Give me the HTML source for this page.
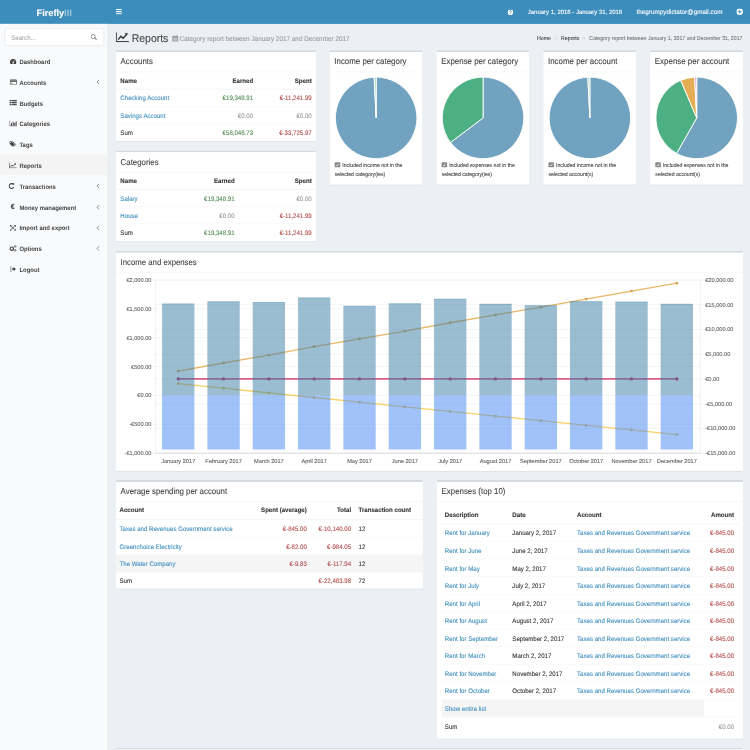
<!DOCTYPE html>
<html><head><meta charset="utf-8">
<style>
html,body{margin:0;padding:0;width:750px;height:750px;overflow:hidden;background:#ecf0f5;}
#pg{position:absolute;left:0;top:0;width:1600px;height:1600px;transform:scale(0.46875);transform-origin:0 0;text-rendering:geometricPrecision;font-family:"Liberation Sans",sans-serif;font-size:13px;color:#333;background:#ecf0f5;overflow:hidden;}
.abs{position:absolute;}
#hdr{left:0;top:0;width:1600px;height:51.2px;background:#3c8dbc;color:#fff;}
#logo{left:0;top:2.5px;width:230px;height:50px;line-height:50px;text-align:center;font-size:19.6px;padding-left:2px;box-sizing:border-box;}
#logo b{font-weight:700;}
#logo span{font-weight:300;opacity:.7;letter-spacing:0.3px;-webkit-text-stroke:0 !important}
#side{left:0;top:51px;width:230px;height:1549px;background:#f9fafc;border-right:1.5px solid #d2d6de;}
#search{left:10px;top:10px;width:208px;height:34px;background:#fff;border:1px solid #d2d6de;border-radius:3px;}
#search .ph{left:13px;top:0;line-height:34px;color:#999;font-size:13px;}
.mi{position:absolute;left:0;width:229px;height:44px;line-height:44px;font-weight:700;color:#444;font-size:13px;}
.mi .ic{position:absolute;left:18px;top:13px;width:18px;height:18px;}
.mi .tx{position:absolute;left:42px;top:0;}
.mi .ar{position:absolute;left:202px;top:0;font-weight:400;color:#777;}
.box{position:absolute;background:#fff;border-top:4.2px solid #d5d9e0;border-radius:3px;box-shadow:0 1px 1px rgba(0,0,0,.1);box-sizing:border-box;}
.bh{position:absolute;left:0;top:0;right:0;height:39px;border-bottom:1px solid #f4f4f4;}
.bh .t{position:absolute;left:10px;top:0;line-height:39px;font-size:16.8px;color:#444;}
table{border-collapse:collapse;}
.tb{position:absolute;left:0;width:100%;}
.tb td,.tb th{height:37px;padding:0 8px;box-sizing:border-box;border-top:1px solid #f4f4f4;white-space:nowrap;font-size:13px;}
.tb th{font-weight:700;color:#333;border-top:0;border-bottom:2px solid #f4f4f4;}
.r{text-align:right;}
.t{position:absolute;white-space:nowrap;}
#pg div,#pg span{-webkit-text-stroke:0.2px currentColor;}
a{color:#3c8dbc;text-decoration:none;}
.g{color:#3c763d;}
.red{color:#a94442;}
.mu{color:#999;}
</style></head><body>
<div id="wrap" style="position:absolute;left:0;top:0;width:750px;height:750px;overflow:hidden;filter:blur(0.45px)">
<div id="pg">
 <!-- header -->
 <div id="hdr" class="abs">
  <div id="logo" class="abs"><b>Firefly</b><span>III</span></div>
  <svg class="abs" style="left:247px;top:19px" width="13" height="12" viewBox="0 0 13 12"><rect x="0" y="0" width="13" height="2.4" fill="#fff"/><rect x="0" y="4.6" width="13" height="2.4" fill="#fff"/><rect x="0" y="9.2" width="13" height="2.4" fill="#fff"/></svg>
  <svg class="abs" style="left:1083px;top:19.5px" width="12" height="12" viewBox="0 0 12 12"><circle cx="6" cy="6" r="6" fill="#fff"/><path d="M4 4.6 A2 2 0 1 1 6.6 6.3 L6 6.8 V8" fill="none" stroke="#3c8dbc" stroke-width="1.5"/><rect x="5.2" y="8.6" width="1.6" height="1.6" fill="#3c8dbc"/></svg>
  <div class="abs" style="left:1126px;top:0.8px;line-height:50px;font-size:12.75px;color:#fff">January 1, 2018 - January 31, 2018</div>
  <div class="abs" style="left:1358px;top:0.8px;line-height:50px;font-size:13.5px;color:#fff">thegrumpydictator@gmail.com</div>
  <svg class="abs" style="left:1571px;top:18px" width="14" height="14" viewBox="0 0 14 14"><circle cx="7" cy="7" r="7" fill="#fff"/><rect x="3" y="6" width="8" height="2" fill="#3c8dbc"/><rect x="6" y="3" width="2" height="8" fill="#3c8dbc"/></svg>
 </div>
 <!-- sidebar -->
 <div id="side" class="abs"></div>
 <div class="t" style="left:10px;top:60px;width:209.5px;height:35.5px;background:#fff;border:1px solid #d2d6de;border-radius:3px;-webkit-text-stroke:0"></div>
<div class="t" style="left:24px;top:70.40px;line-height:20px;font-size:13px;color:#aaa;font-weight:400;transform:scaleY(1.08);">Search...</div>
<svg class="t" style="left:193px;top:72px" width="14" height="14" viewBox="0 0 14 14"><circle cx="5.8" cy="5.8" r="4.3" fill="none" stroke="#888" stroke-width="1.9"/><line x1="9" y1="9" x2="12.5" y2="12.5" stroke="#888" stroke-width="2.4" stroke-linecap="round"/></svg>
<div class="t" style="left:41.5px;top:121.70px;line-height:20px;font-size:12.6px;color:#444;font-weight:700;transform:scaleY(1.08);-webkit-text-stroke:0">Dashboard</div>
<div class="t" style="left:41.5px;top:166.10px;line-height:20px;font-size:12.6px;color:#444;font-weight:700;transform:scaleY(1.08);-webkit-text-stroke:0">Accounts</div>
<svg class="t" style="left:204px;top:169.2px" width="10" height="12" viewBox="0 0 10 12"><path d="M7.5 1.5 L3 6 L7.5 10.5" fill="none" stroke="#666" stroke-width="1.5"/></svg>
<div class="t" style="left:41.5px;top:210.50px;line-height:20px;font-size:12.6px;color:#444;font-weight:700;transform:scaleY(1.08);-webkit-text-stroke:0">Budgets</div>
<div class="t" style="left:41.5px;top:254.90px;line-height:20px;font-size:12.6px;color:#444;font-weight:700;transform:scaleY(1.08);-webkit-text-stroke:0">Categories</div>
<div class="t" style="left:41.5px;top:299.30px;line-height:20px;font-size:12.6px;color:#444;font-weight:700;transform:scaleY(1.08);-webkit-text-stroke:0">Tags</div>
<div class="t" style="left:0px;top:329.8px;width:230px;height:43.2px;background:#f4f4f5"></div>
<div class="t" style="left:41.5px;top:343.70px;line-height:20px;font-size:12.6px;color:#444;font-weight:700;transform:scaleY(1.08);-webkit-text-stroke:0">Reports</div>
<div class="t" style="left:41.5px;top:388.10px;line-height:20px;font-size:12.6px;color:#444;font-weight:700;transform:scaleY(1.08);-webkit-text-stroke:0">Transactions</div>
<svg class="t" style="left:204px;top:391.2px" width="10" height="12" viewBox="0 0 10 12"><path d="M7.5 1.5 L3 6 L7.5 10.5" fill="none" stroke="#666" stroke-width="1.5"/></svg>
<div class="t" style="left:41.5px;top:432.50px;line-height:20px;font-size:12.6px;color:#444;font-weight:700;transform:scaleY(1.08);-webkit-text-stroke:0">Money management</div>
<svg class="t" style="left:204px;top:435.6px" width="10" height="12" viewBox="0 0 10 12"><path d="M7.5 1.5 L3 6 L7.5 10.5" fill="none" stroke="#666" stroke-width="1.5"/></svg>
<div class="t" style="left:41.5px;top:476.90px;line-height:20px;font-size:12.6px;color:#444;font-weight:700;transform:scaleY(1.08);-webkit-text-stroke:0">Import and export</div>
<svg class="t" style="left:204px;top:480.0px" width="10" height="12" viewBox="0 0 10 12"><path d="M7.5 1.5 L3 6 L7.5 10.5" fill="none" stroke="#666" stroke-width="1.5"/></svg>
<div class="t" style="left:41.5px;top:521.30px;line-height:20px;font-size:12.6px;color:#444;font-weight:700;transform:scaleY(1.08);-webkit-text-stroke:0">Options</div>
<svg class="t" style="left:204px;top:524.4px" width="10" height="12" viewBox="0 0 10 12"><path d="M7.5 1.5 L3 6 L7.5 10.5" fill="none" stroke="#666" stroke-width="1.5"/></svg>
<div class="t" style="left:41.5px;top:565.70px;line-height:20px;font-size:12.6px;color:#444;font-weight:700;transform:scaleY(1.08);-webkit-text-stroke:0">Logout</div>
<svg class="t" style="left:21px;top:124.5px" width="14" height="12" viewBox="0 0 14 12"><path d="M1.26 11.5 A7 7 0 1 1 12.74 11.5 Z" fill="#444"/><path d="M7 9.5 L9.8 4" stroke="#f9fafc" stroke-width="1.4"/><circle cx="7" cy="9.5" r="1.6" fill="#f9fafc"/><circle cx="3" cy="6.5" r="0.8" fill="#f9fafc"/><circle cx="7" cy="3" r="0.8" fill="#f9fafc"/></svg>
<svg class="t" style="left:20.7px;top:168.5px" width="15" height="12.5" viewBox="0 0 15 12.5"><rect x="0.8" y="0.8" width="13.4" height="10.9" rx="1" fill="none" stroke="#444" stroke-width="1.6"/><rect x="0.8" y="2.5" width="13.4" height="3" fill="#444"/><rect x="2.5" y="8.5" width="3" height="1.2" fill="#444"/></svg>
<svg class="t" style="left:20.3px;top:212.5px" width="16" height="12" viewBox="0 0 16 12"><rect x="0" y="0" width="16" height="3" fill="#444"/><rect x="0" y="4.5" width="16" height="3" fill="#444"/><rect x="0" y="9" width="16" height="3" fill="#444"/><rect x="4" y="0.9" width="1" height="11" fill="#f9fafc"/></svg>
<svg class="t" style="left:19.6px;top:257.4px" width="16.5" height="12.5" viewBox="0 0 16.5 12.5"><path d="M0.8 0 V11.7 H16.5" fill="none" stroke="#444" stroke-width="1.5"/><rect x="3.5" y="6" width="2.2" height="5" fill="#444"/><rect x="7" y="3" width="2.2" height="8" fill="#444"/><rect x="10.5" y="5" width="2.2" height="6" fill="#444"/><rect x="13.5" y="2" width="2.2" height="9" fill="#444"/></svg>
<svg class="t" style="left:20.2px;top:301.2px" width="15.5" height="12" viewBox="0 0 15.5 12"><path d="M0 0.5 L0 5 L7 12 L11.5 7.5 L4.5 0.5Z" fill="#444"/><path d="M6.5 0.5 L13.5 7.5 L9.5 11.8" fill="none" stroke="#444" stroke-width="1.6"/><circle cx="2.6" cy="3" r="1.1" fill="#f9fafc"/></svg>
<svg class="t" style="left:19.2px;top:346.9px" width="16.5" height="12" viewBox="0 0 16.5 12"><path d="M0.8 0 V11.2 H16.5" fill="none" stroke="#444" stroke-width="1.5"/><path d="M3 9 L6.5 5 L9 7.5 L13.5 3" fill="none" stroke="#444" stroke-width="1.8"/><path d="M11 1.8 L15.2 1 L14.6 5Z" fill="#444"/></svg>
<svg class="t" style="left:17.7px;top:390.4px" width="13" height="13" viewBox="0 0 13 13"><path d="M11 4 A5.2 5.2 0 1 0 11.4 9" fill="none" stroke="#444" stroke-width="2.3"/><path d="M8.5 1 L12.8 0.5 L12.5 5.5Z" fill="#444"/></svg>
<div class="t" style="left:23.2px;top:431.90px;line-height:20px;font-size:15px;color:#444;font-weight:700;transform:scaleY(1.08);">&#8364;</div>
<svg class="t" style="left:21.3px;top:480px" width="13" height="12" viewBox="0 0 13 12"><path d="M2.5 2.5 L10.5 9.5 M10.5 2.5 L2.5 9.5" stroke="#444" stroke-width="1.7"/><path d="M0 0 H4.5 L0 4Z M13 0 V4 L8.5 0Z M0 12 V8 L4.5 12Z M13 12 H8.5 L13 8Z" fill="#444"/></svg>
<svg class="t" style="left:20.3px;top:522.8px" width="15.5" height="14" viewBox="0 0 15.5 14"><circle cx="5" cy="7.5" r="3.6" fill="none" stroke="#444" stroke-width="2.6"/><circle cx="12.3" cy="2.6" r="1.9" fill="none" stroke="#444" stroke-width="1.6"/><circle cx="12.3" cy="11.2" r="1.9" fill="none" stroke="#444" stroke-width="1.6"/></svg>
<svg class="t" style="left:21.4px;top:567.9px" width="13.5" height="12" viewBox="0 0 13.5 12"><path d="M4.5 1 H1.2 V11 H4.5" fill="none" stroke="#888" stroke-width="1.4"/><path d="M4 4.5 H8 V1.5 L13 6 L8 10.5 V7.5 H4Z" fill="#444"/></svg>
<svg class="t" style="left:247px;top:68.5px" width="28" height="21" viewBox="0 0 28 21"><path d="M1.2 0 V19.8 H28" fill="none" stroke="#444" stroke-width="2.2"/><path d="M5 15.5 L11 8.5 L15.5 12.5 L22.5 5" fill="none" stroke="#333" stroke-width="3"/><path d="M18.5 2.5 L25 1 L24.2 7.5Z" fill="#333"/></svg>
<div class="t" style="left:281px;top:65.70px;line-height:30px;font-size:22.3px;color:#444;font-weight:400;transform:scaleY(1.08);">Reports</div>
<svg class="t" style="left:367px;top:75px" width="14" height="14" viewBox="0 0 14 14"><rect x="0.5" y="2" width="13" height="12" rx="1" fill="#999"/><rect x="3" y="0" width="2" height="3.5" fill="#999"/><rect x="9" y="0" width="2" height="3.5" fill="#999"/><path d="M2 6 H12 M2 9 H12 M2 12 H12 M5 5 V13.5 M8.5 5 V13.5" stroke="#ecf0f5" stroke-width="0.8"/></svg>
<div class="t" style="left:383px;top:73.70px;line-height:20px;font-size:13.6px;color:#9a9a9a;font-weight:400;transform:scaleY(1.08);">Category report between January 2017 and December 2017</div>
<div class="t" style="left:1145.5px;top:73.40px;line-height:20px;font-size:11.2px;color:#444;font-weight:400;transform:scaleY(1.08);">Home</div>
<div class="t" style="left:1183px;top:73.40px;line-height:20px;font-size:9px;color:#ccc;font-weight:400;transform:scaleY(1.08);">&gt;</div>
<div class="t" style="left:1197px;top:73.40px;line-height:20px;font-size:11.1px;color:#444;font-weight:400;transform:scaleY(1.08);">Reports</div>
<div class="t" style="left:1243px;top:73.40px;line-height:20px;font-size:9px;color:#ccc;font-weight:400;transform:scaleY(1.08);">&gt;</div>
<div class="t" style="left:1257px;top:73.40px;line-height:20px;font-size:11.1px;color:#777;font-weight:400;transform:scaleY(1.08);">Category report between January 1, 2017 and December 31, 2017</div>
<div class="box" style="left:246.8px;top:106.8px;width:427.5px;height:194.2px;"></div>
<div class="t" style="left:257.3px;top:120.40px;line-height:24px;font-size:16.8px;color:#444;font-weight:400;transform:scaleY(1.08);">Accounts</div>
<div class="t" style="left:246.8px;top:152.5px;width:427.5px;height:1px;background:#efefef"></div>
<div class="t" style="left:246.8px;top:189px;width:427.5px;height:2px;background:#f4f4f4"></div>
<div class="t" style="left:246.8px;top:226px;width:427.5px;height:1px;background:#f4f4f4"></div>
<div class="t" style="left:246.8px;top:263px;width:427.5px;height:1px;background:#f4f4f4"></div>
<div class="t" style="left:256.8px;top:161.90px;line-height:20px;font-size:13px;color:#333;font-weight:700;transform:scaleY(1.08);">Name</div>
<div class="t" style="left:-460px;width:1000px;text-align:right;top:161.90px;line-height:20px;font-size:13px;color:#333;font-weight:700;transform:scaleY(1.08);">Earned</div>
<div class="t" style="left:-335px;width:1000px;text-align:right;top:161.90px;line-height:20px;font-size:13px;color:#333;font-weight:700;transform:scaleY(1.08);">Spent</div>
<div class="t" style="left:256.8px;top:200.20px;line-height:20px;font-size:13px;color:#3c8dbc;font-weight:400;transform:scaleY(1.08);">Checking Account</div>
<div class="t" style="left:-460px;width:1000px;text-align:right;top:200.20px;line-height:20px;font-size:13px;color:#4f8d53;font-weight:400;transform:scaleY(1.08);">€19,348.91</div>
<div class="t" style="left:-335px;width:1000px;text-align:right;top:200.20px;line-height:20px;font-size:13px;color:#b04a47;font-weight:400;transform:scaleY(1.08);">€-11,241.99</div>
<div class="t" style="left:256.8px;top:237.20px;line-height:20px;font-size:13px;color:#3c8dbc;font-weight:400;transform:scaleY(1.08);">Savings Account</div>
<div class="t" style="left:-460px;width:1000px;text-align:right;top:237.20px;line-height:20px;font-size:13px;color:#999;font-weight:400;transform:scaleY(1.08);">€0.00</div>
<div class="t" style="left:-335px;width:1000px;text-align:right;top:237.20px;line-height:20px;font-size:13px;color:#999;font-weight:400;transform:scaleY(1.08);">€0.00</div>
<div class="t" style="left:256.8px;top:274.20px;line-height:20px;font-size:13px;color:#333;font-weight:400;transform:scaleY(1.08);">Sum</div>
<div class="t" style="left:-460px;width:1000px;text-align:right;top:274.20px;line-height:20px;font-size:13px;color:#4f8d53;font-weight:400;transform:scaleY(1.08);">€58,046.73</div>
<div class="t" style="left:-335px;width:1000px;text-align:right;top:274.20px;line-height:20px;font-size:13px;color:#b04a47;font-weight:400;transform:scaleY(1.08);">€-33,725.97</div>
<div class="box" style="left:246.8px;top:320.8px;width:427.5px;height:194.2px;"></div>
<div class="t" style="left:257.3px;top:334.40px;line-height:24px;font-size:16.8px;color:#444;font-weight:400;transform:scaleY(1.08);">Categories</div>
<div class="t" style="left:246.8px;top:366.5px;width:427.5px;height:1px;background:#efefef"></div>
<div class="t" style="left:246.8px;top:403px;width:427.5px;height:2px;background:#f4f4f4"></div>
<div class="t" style="left:246.8px;top:440px;width:427.5px;height:1px;background:#f4f4f4"></div>
<div class="t" style="left:246.8px;top:477px;width:427.5px;height:1px;background:#f4f4f4"></div>
<div class="t" style="left:256.8px;top:375.90px;line-height:20px;font-size:13px;color:#333;font-weight:700;transform:scaleY(1.08);">Name</div>
<div class="t" style="left:-499.5px;width:1000px;text-align:right;top:375.90px;line-height:20px;font-size:13px;color:#333;font-weight:700;transform:scaleY(1.08);">Earned</div>
<div class="t" style="left:-335px;width:1000px;text-align:right;top:375.90px;line-height:20px;font-size:13px;color:#333;font-weight:700;transform:scaleY(1.08);">Spent</div>
<div class="t" style="left:256.8px;top:414.40px;line-height:20px;font-size:13px;color:#3c8dbc;font-weight:400;transform:scaleY(1.08);">Salary</div>
<div class="t" style="left:-499.5px;width:1000px;text-align:right;top:414.40px;line-height:20px;font-size:13px;color:#4f8d53;font-weight:400;transform:scaleY(1.08);">€19,348.91</div>
<div class="t" style="left:-335px;width:1000px;text-align:right;top:414.40px;line-height:20px;font-size:13px;color:#999;font-weight:400;transform:scaleY(1.08);">€0.00</div>
<div class="t" style="left:256.8px;top:451.40px;line-height:20px;font-size:13px;color:#3c8dbc;font-weight:400;transform:scaleY(1.08);">House</div>
<div class="t" style="left:-499.5px;width:1000px;text-align:right;top:451.40px;line-height:20px;font-size:13px;color:#999;font-weight:400;transform:scaleY(1.08);">€0.00</div>
<div class="t" style="left:-335px;width:1000px;text-align:right;top:451.40px;line-height:20px;font-size:13px;color:#b04a47;font-weight:400;transform:scaleY(1.08);">€-11,241.99</div>
<div class="t" style="left:256.8px;top:488.40px;line-height:20px;font-size:13px;color:#333;font-weight:400;transform:scaleY(1.08);">Sum</div>
<div class="t" style="left:-499.5px;width:1000px;text-align:right;top:488.40px;line-height:20px;font-size:13px;color:#4f8d53;font-weight:400;transform:scaleY(1.08);">€19,348.91</div>
<div class="t" style="left:-335px;width:1000px;text-align:right;top:488.40px;line-height:20px;font-size:13px;color:#b04a47;font-weight:400;transform:scaleY(1.08);">€-11,241.99</div>
<div class="box" style="left:702.7px;top:106.8px;width:198px;height:287.2px;"></div>
<div class="t" style="left:713.2px;top:120.40px;line-height:24px;font-size:16.9px;color:#444;font-weight:400;transform:scaleY(1.08);">Income per category</div>
<div class="t" style="left:702.7px;top:152.5px;width:198px;height:1px;background:#efefef"></div>
<div class="t" style="left:714.2px;top:345.5px;width:12px;height:11.5px;border-radius:2.5px;background:#8a8a8a"></div>
<svg class="t" style="left:714.2px;top:345.5px" width="12" height="11.5" viewBox="0 0 12 11.5"><path d="M3.2 6 L5.2 8 L9 3.5" fill="none" stroke="#fff" stroke-width="1.5"/></svg>
<div class="t" style="left:730.2px;top:342.40px;line-height:20px;font-size:11px;color:#444;font-weight:400;transform:scaleY(1.08);">Included income not in the</div>
<div class="t" style="left:714.2px;top:362.90px;line-height:20px;font-size:11px;color:#444;font-weight:400;transform:scaleY(1.08);">selected category(ies)</div>
<div class="box" style="left:930.7px;top:106.8px;width:198px;height:287.2px;"></div>
<div class="t" style="left:941.2px;top:120.40px;line-height:24px;font-size:16.9px;color:#444;font-weight:400;transform:scaleY(1.08);">Expense per category</div>
<div class="t" style="left:930.7px;top:152.5px;width:198px;height:1px;background:#efefef"></div>
<div class="t" style="left:942.2px;top:345.5px;width:12px;height:11.5px;border-radius:2.5px;background:#8a8a8a"></div>
<svg class="t" style="left:942.2px;top:345.5px" width="12" height="11.5" viewBox="0 0 12 11.5"><path d="M3.2 6 L5.2 8 L9 3.5" fill="none" stroke="#fff" stroke-width="1.5"/></svg>
<div class="t" style="left:958.2px;top:342.40px;line-height:20px;font-size:11px;color:#444;font-weight:400;transform:scaleY(1.08);">Included expenses not in the</div>
<div class="t" style="left:942.2px;top:362.90px;line-height:20px;font-size:11px;color:#444;font-weight:400;transform:scaleY(1.08);">selected category(ies)</div>
<div class="box" style="left:1158.6px;top:106.8px;width:198px;height:287.2px;"></div>
<div class="t" style="left:1169.1px;top:120.40px;line-height:24px;font-size:16.9px;color:#444;font-weight:400;transform:scaleY(1.08);">Income per account</div>
<div class="t" style="left:1158.6px;top:152.5px;width:198px;height:1px;background:#efefef"></div>
<div class="t" style="left:1170.1px;top:345.5px;width:12px;height:11.5px;border-radius:2.5px;background:#8a8a8a"></div>
<svg class="t" style="left:1170.1px;top:345.5px" width="12" height="11.5" viewBox="0 0 12 11.5"><path d="M3.2 6 L5.2 8 L9 3.5" fill="none" stroke="#fff" stroke-width="1.5"/></svg>
<div class="t" style="left:1186.1px;top:342.40px;line-height:20px;font-size:11px;color:#444;font-weight:400;transform:scaleY(1.08);">Included income not in the</div>
<div class="t" style="left:1170.1px;top:362.90px;line-height:20px;font-size:11px;color:#444;font-weight:400;transform:scaleY(1.08);">selected account(s)</div>
<div class="box" style="left:1386.5px;top:106.8px;width:198px;height:287.2px;"></div>
<div class="t" style="left:1397.0px;top:120.40px;line-height:24px;font-size:16.9px;color:#444;font-weight:400;transform:scaleY(1.08);">Expense per account</div>
<div class="t" style="left:1386.5px;top:152.5px;width:198px;height:1px;background:#efefef"></div>
<div class="t" style="left:1398.0px;top:345.5px;width:12px;height:11.5px;border-radius:2.5px;background:#8a8a8a"></div>
<svg class="t" style="left:1398.0px;top:345.5px" width="12" height="11.5" viewBox="0 0 12 11.5"><path d="M3.2 6 L5.2 8 L9 3.5" fill="none" stroke="#fff" stroke-width="1.5"/></svg>
<div class="t" style="left:1414.0px;top:342.40px;line-height:20px;font-size:11px;color:#444;font-weight:400;transform:scaleY(1.08);">Included expenses not in the</div>
<div class="t" style="left:1398.0px;top:362.90px;line-height:20px;font-size:11px;color:#444;font-weight:400;transform:scaleY(1.08);">selected account(s)</div>
<svg class="t" style="left:0;top:0" width="1600" height="420" viewBox="0 0 1600 420"><path d="M802.5,251.5 L802.50,164.50 A87,87 0 1 1 798.13,164.61 Z" fill="rgb(113,163,192)" stroke="#fff" stroke-width="2"/><path d="M802.5,251.5 L798.13,164.61 A87,87 0 0 1 802.50,164.50 Z" fill="rgb(160,210,180)" stroke="#fff" stroke-width="2"/><path d="M1030.5,251.5 L1030.50,164.50 A87,87 0 1 1 961.09,303.95 Z" fill="rgb(113,163,192)" stroke="#fff" stroke-width="2"/><path d="M1030.5,251.5 L961.09,303.95 A87,87 0 0 1 1030.50,164.50 Z" fill="rgb(77,176,130)" stroke="#fff" stroke-width="2"/><path d="M1258.4,251.5 L1258.40,164.50 A87,87 0 1 1 1254.03,164.61 Z" fill="rgb(113,163,192)" stroke="#fff" stroke-width="2"/><path d="M1258.4,251.5 L1254.03,164.61 A87,87 0 0 1 1258.40,164.50 Z" fill="rgb(160,210,180)" stroke="#fff" stroke-width="2"/><path d="M1486.3,251.5 L1486.30,164.50 A87,87 0 1 1 1443.43,327.21 Z" fill="rgb(113,163,192)" stroke="#fff" stroke-width="2"/><path d="M1486.3,251.5 L1443.43,327.21 A87,87 0 0 1 1452.25,171.44 Z" fill="rgb(77,176,130)" stroke="#fff" stroke-width="2"/><path d="M1486.3,251.5 L1452.25,171.44 A87,87 0 0 1 1481.93,164.61 Z" fill="rgb(230,174,84)" stroke="#fff" stroke-width="2"/><path d="M1486.3,251.5 L1481.93,164.61 A87,87 0 0 1 1486.30,164.50 Z" fill="rgb(232,150,185)" stroke="#fff" stroke-width="2"/></svg>
<div class="box" style="left:246.8px;top:534.8px;width:1338px;height:470.2px;"></div>
<div class="t" style="left:257.3px;top:548.40px;line-height:24px;font-size:16.6px;color:#444;font-weight:400;transform:scaleY(1.08);">Income and expenses</div>
<div class="t" style="left:246.8px;top:580.5px;width:1338px;height:1px;background:#efefef"></div>
<svg class="t" style="left:0;top:0" width="1600" height="1010" viewBox="0 0 1600 1010"><line x1="322" y1="597.3" x2="1494" y2="597.3" stroke="rgba(0,0,0,0.08)" stroke-width="1.2"/><line x1="322" y1="658.9" x2="1494" y2="658.9" stroke="rgba(0,0,0,0.08)" stroke-width="1.2"/><line x1="322" y1="720.5" x2="1494" y2="720.5" stroke="rgba(0,0,0,0.08)" stroke-width="1.2"/><line x1="322" y1="782.0" x2="1494" y2="782.0" stroke="rgba(0,0,0,0.08)" stroke-width="1.2"/><line x1="322" y1="843.6" x2="1494" y2="843.6" stroke="rgba(0,0,0,0.08)" stroke-width="1.2"/><line x1="322" y1="905.2" x2="1494" y2="905.2" stroke="rgba(0,0,0,0.08)" stroke-width="1.2"/><line x1="322" y1="966.8" x2="1494" y2="966.8" stroke="rgba(0,0,0,0.08)" stroke-width="1.2"/><line x1="332" y1="597.3" x2="1504" y2="597.3" stroke="rgba(0,0,0,0.08)" stroke-width="1.2"/><line x1="332" y1="650.1" x2="1504" y2="650.1" stroke="rgba(0,0,0,0.08)" stroke-width="1.2"/><line x1="332" y1="702.9" x2="1504" y2="702.9" stroke="rgba(0,0,0,0.08)" stroke-width="1.2"/><line x1="332" y1="755.7" x2="1504" y2="755.7" stroke="rgba(0,0,0,0.08)" stroke-width="1.2"/><line x1="332" y1="808.4" x2="1504" y2="808.4" stroke="rgba(0,0,0,0.08)" stroke-width="1.2"/><line x1="332" y1="861.2" x2="1504" y2="861.2" stroke="rgba(0,0,0,0.08)" stroke-width="1.2"/><line x1="332" y1="914.0" x2="1504" y2="914.0" stroke="rgba(0,0,0,0.08)" stroke-width="1.2"/><line x1="332" y1="966.8" x2="1504" y2="966.8" stroke="rgba(0,0,0,0.08)" stroke-width="1.2"/><line x1="332" y1="597.3" x2="332" y2="966.8" stroke="rgba(0,0,0,0.1)" stroke-width="1.2"/><line x1="1494" y1="597.3" x2="1494" y2="966.8" stroke="rgba(0,0,0,0.1)" stroke-width="1.2"/><line x1="332" y1="966.8" x2="1494" y2="966.8" stroke="rgba(0,0,0,0.15)" stroke-width="1.2"/><polyline points="380.2,791.6 476.9,774.4 573.6,757.4 670.3,739.4 767.0,723.1 863.7,706.2 960.4,688.5 1057.1,671.8 1153.8,655.3 1250.5,638.1 1347.2,620.9 1443.9,604.2" fill="none" stroke="rgba(219,139,11,0.62)" stroke-width="2.8"/><polyline points="380.2,818.3 476.9,828.2 573.6,838.1 670.3,848.0 767.0,857.9 863.7,867.8 960.4,877.7 1057.1,887.6 1153.8,897.5 1250.5,907.3 1347.2,917.2 1443.9,927.1" fill="none" stroke="rgba(244,180,0,0.62)" stroke-width="2.8"/><polyline points="380.2,808.4 1443.9,808.4" fill="none" stroke="rgba(202,25,90,0.7)" stroke-width="3.6"/><circle cx="380.2" cy="791.6" r="3" fill="rgb(210,165,80)"/><circle cx="476.9" cy="774.4" r="3" fill="rgb(210,165,80)"/><circle cx="573.6" cy="757.4" r="3" fill="rgb(210,165,80)"/><circle cx="670.3" cy="739.4" r="3" fill="rgb(210,165,80)"/><circle cx="767.0" cy="723.1" r="3" fill="rgb(210,165,80)"/><circle cx="863.7" cy="706.2" r="3" fill="rgb(210,165,80)"/><circle cx="960.4" cy="688.5" r="3" fill="rgb(210,165,80)"/><circle cx="1057.1" cy="671.8" r="3" fill="rgb(210,165,80)"/><circle cx="1153.8" cy="655.3" r="3" fill="rgb(210,165,80)"/><circle cx="1250.5" cy="638.1" r="3" fill="rgb(210,165,80)"/><circle cx="1347.2" cy="620.9" r="3" fill="rgb(210,165,80)"/><circle cx="1443.9" cy="604.2" r="3" fill="rgb(210,165,80)"/><circle cx="380.2" cy="818.3" r="3" fill="rgb(225,190,80)"/><circle cx="476.9" cy="828.2" r="3" fill="rgb(225,190,80)"/><circle cx="573.6" cy="838.1" r="3" fill="rgb(225,190,80)"/><circle cx="670.3" cy="848.0" r="3" fill="rgb(225,190,80)"/><circle cx="767.0" cy="857.9" r="3" fill="rgb(225,190,80)"/><circle cx="863.7" cy="867.8" r="3" fill="rgb(225,190,80)"/><circle cx="960.4" cy="877.7" r="3" fill="rgb(225,190,80)"/><circle cx="1057.1" cy="887.6" r="3" fill="rgb(225,190,80)"/><circle cx="1153.8" cy="897.5" r="3" fill="rgb(225,190,80)"/><circle cx="1250.5" cy="907.3" r="3" fill="rgb(225,190,80)"/><circle cx="1347.2" cy="917.2" r="3" fill="rgb(225,190,80)"/><circle cx="1443.9" cy="927.1" r="3" fill="rgb(225,190,80)"/><circle cx="380.2" cy="808.4" r="3.4" fill="rgb(200,40,100)"/><circle cx="476.9" cy="808.4" r="3.4" fill="rgb(200,40,100)"/><circle cx="573.6" cy="808.4" r="3.4" fill="rgb(200,40,100)"/><circle cx="670.3" cy="808.4" r="3.4" fill="rgb(200,40,100)"/><circle cx="767.0" cy="808.4" r="3.4" fill="rgb(200,40,100)"/><circle cx="863.7" cy="808.4" r="3.4" fill="rgb(200,40,100)"/><circle cx="960.4" cy="808.4" r="3.4" fill="rgb(200,40,100)"/><circle cx="1057.1" cy="808.4" r="3.4" fill="rgb(200,40,100)"/><circle cx="1153.8" cy="808.4" r="3.4" fill="rgb(200,40,100)"/><circle cx="1250.5" cy="808.4" r="3.4" fill="rgb(200,40,100)"/><circle cx="1347.2" cy="808.4" r="3.4" fill="rgb(200,40,100)"/><circle cx="1443.9" cy="808.4" r="3.4" fill="rgb(200,40,100)"/><rect x="345.7" y="647.6" width="69.0" height="196.0" fill="rgba(53,124,165,0.5)"/><rect x="345.7" y="647.6" width="69.0" height="2" fill="rgba(53,124,165,0.2)"/><rect x="345.7" y="843.6" width="69.0" height="115.4" fill="rgba(66,133,244,0.5)"/><rect x="442.4" y="642.9" width="69.0" height="200.7" fill="rgba(53,124,165,0.5)"/><rect x="442.4" y="642.9" width="69.0" height="2" fill="rgba(53,124,165,0.2)"/><rect x="442.4" y="843.6" width="69.0" height="115.4" fill="rgba(66,133,244,0.5)"/><rect x="539.1" y="644.4" width="69.0" height="199.2" fill="rgba(53,124,165,0.5)"/><rect x="539.1" y="644.4" width="69.0" height="2" fill="rgba(53,124,165,0.2)"/><rect x="539.1" y="843.6" width="69.0" height="115.4" fill="rgba(66,133,244,0.5)"/><rect x="635.8" y="634.6" width="69.0" height="209.1" fill="rgba(53,124,165,0.5)"/><rect x="635.8" y="634.6" width="69.0" height="2" fill="rgba(53,124,165,0.2)"/><rect x="635.8" y="843.6" width="69.0" height="115.4" fill="rgba(66,133,244,0.5)"/><rect x="732.5" y="652.5" width="69.0" height="191.1" fill="rgba(53,124,165,0.5)"/><rect x="732.5" y="652.5" width="69.0" height="2" fill="rgba(53,124,165,0.2)"/><rect x="732.5" y="843.6" width="69.0" height="115.4" fill="rgba(66,133,244,0.5)"/><rect x="829.2" y="647.2" width="69.0" height="196.4" fill="rgba(53,124,165,0.5)"/><rect x="829.2" y="647.2" width="69.0" height="2" fill="rgba(53,124,165,0.2)"/><rect x="829.2" y="843.6" width="69.0" height="115.4" fill="rgba(66,133,244,0.5)"/><rect x="925.9" y="637.4" width="69.0" height="206.2" fill="rgba(53,124,165,0.5)"/><rect x="925.9" y="637.4" width="69.0" height="2" fill="rgba(53,124,165,0.2)"/><rect x="925.9" y="843.6" width="69.0" height="115.4" fill="rgba(66,133,244,0.5)"/><rect x="1022.6" y="648.2" width="69.0" height="195.4" fill="rgba(53,124,165,0.5)"/><rect x="1022.6" y="648.2" width="69.0" height="2" fill="rgba(53,124,165,0.2)"/><rect x="1022.6" y="843.6" width="69.0" height="115.4" fill="rgba(66,133,244,0.5)"/><rect x="1119.3" y="651.2" width="69.0" height="192.5" fill="rgba(53,124,165,0.5)"/><rect x="1119.3" y="651.2" width="69.0" height="2" fill="rgba(53,124,165,0.2)"/><rect x="1119.3" y="843.6" width="69.0" height="115.4" fill="rgba(66,133,244,0.5)"/><rect x="1216.0" y="642.7" width="69.0" height="201.0" fill="rgba(53,124,165,0.5)"/><rect x="1216.0" y="642.7" width="69.0" height="2" fill="rgba(53,124,165,0.2)"/><rect x="1216.0" y="843.6" width="69.0" height="115.4" fill="rgba(66,133,244,0.5)"/><rect x="1312.7" y="643.5" width="69.0" height="200.1" fill="rgba(53,124,165,0.5)"/><rect x="1312.7" y="643.5" width="69.0" height="2" fill="rgba(53,124,165,0.2)"/><rect x="1312.7" y="843.6" width="69.0" height="115.4" fill="rgba(66,133,244,0.5)"/><rect x="1409.4" y="648.2" width="69.0" height="195.4" fill="rgba(53,124,165,0.5)"/><rect x="1409.4" y="648.2" width="69.0" height="2" fill="rgba(53,124,165,0.2)"/><rect x="1409.4" y="843.6" width="69.0" height="115.4" fill="rgba(66,133,244,0.5)"/><text x="323" y="601.6" text-anchor="end" font-size="12" fill="#666" font-family="Liberation Sans" stroke="#666" stroke-width="0.25">€2,000.00</text><text x="323" y="663.2" text-anchor="end" font-size="12" fill="#666" font-family="Liberation Sans" stroke="#666" stroke-width="0.25">€1,500.00</text><text x="323" y="724.8" text-anchor="end" font-size="12" fill="#666" font-family="Liberation Sans" stroke="#666" stroke-width="0.25">€1,000.00</text><text x="323" y="786.3" text-anchor="end" font-size="12" fill="#666" font-family="Liberation Sans" stroke="#666" stroke-width="0.25">€500.00</text><text x="323" y="847.9" text-anchor="end" font-size="12" fill="#666" font-family="Liberation Sans" stroke="#666" stroke-width="0.25">€0.00</text><text x="323" y="909.5" text-anchor="end" font-size="12" fill="#666" font-family="Liberation Sans" stroke="#666" stroke-width="0.25">-€500.00</text><text x="323" y="971.1" text-anchor="end" font-size="12" fill="#666" font-family="Liberation Sans" stroke="#666" stroke-width="0.25">-€1,000.00</text><text x="1504.5" y="601.6" font-size="12" fill="#666" font-family="Liberation Sans" stroke="#666" stroke-width="0.25">€20,000.00</text><text x="1504.5" y="654.4" font-size="12" fill="#666" font-family="Liberation Sans" stroke="#666" stroke-width="0.25">€15,000.00</text><text x="1504.5" y="707.2" font-size="12" fill="#666" font-family="Liberation Sans" stroke="#666" stroke-width="0.25">€10,000.00</text><text x="1504.5" y="760.0" font-size="12" fill="#666" font-family="Liberation Sans" stroke="#666" stroke-width="0.25">€5,000.00</text><text x="1504.5" y="812.7" font-size="12" fill="#666" font-family="Liberation Sans" stroke="#666" stroke-width="0.25">€0.00</text><text x="1504.5" y="865.5" font-size="12" fill="#666" font-family="Liberation Sans" stroke="#666" stroke-width="0.25">-€5,000.00</text><text x="1504.5" y="918.3" font-size="12" fill="#666" font-family="Liberation Sans" stroke="#666" stroke-width="0.25">-€10,000.00</text><text x="1504.5" y="971.1" font-size="12" fill="#666" font-family="Liberation Sans" stroke="#666" stroke-width="0.25">-€15,000.00</text><text x="380.2" y="987.5" text-anchor="middle" font-size="12" fill="#666" font-family="Liberation Sans" stroke="#666" stroke-width="0.25">January 2017</text><text x="476.9" y="987.5" text-anchor="middle" font-size="12" fill="#666" font-family="Liberation Sans" stroke="#666" stroke-width="0.25">February 2017</text><text x="573.6" y="987.5" text-anchor="middle" font-size="12" fill="#666" font-family="Liberation Sans" stroke="#666" stroke-width="0.25">March 2017</text><text x="670.3" y="987.5" text-anchor="middle" font-size="12" fill="#666" font-family="Liberation Sans" stroke="#666" stroke-width="0.25">April 2017</text><text x="767.0" y="987.5" text-anchor="middle" font-size="12" fill="#666" font-family="Liberation Sans" stroke="#666" stroke-width="0.25">May 2017</text><text x="863.7" y="987.5" text-anchor="middle" font-size="12" fill="#666" font-family="Liberation Sans" stroke="#666" stroke-width="0.25">June 2017</text><text x="960.4" y="987.5" text-anchor="middle" font-size="12" fill="#666" font-family="Liberation Sans" stroke="#666" stroke-width="0.25">July 2017</text><text x="1057.1" y="987.5" text-anchor="middle" font-size="12" fill="#666" font-family="Liberation Sans" stroke="#666" stroke-width="0.25">August 2017</text><text x="1153.8" y="987.5" text-anchor="middle" font-size="12" fill="#666" font-family="Liberation Sans" stroke="#666" stroke-width="0.25">September 2017</text><text x="1250.5" y="987.5" text-anchor="middle" font-size="12" fill="#666" font-family="Liberation Sans" stroke="#666" stroke-width="0.25">October 2017</text><text x="1347.2" y="987.5" text-anchor="middle" font-size="12" fill="#666" font-family="Liberation Sans" stroke="#666" stroke-width="0.25">November 2017</text><text x="1443.9" y="987.5" text-anchor="middle" font-size="12" fill="#666" font-family="Liberation Sans" stroke="#666" stroke-width="0.25">December 2017</text></svg>
<div class="box" style="left:246.8px;top:1023.8px;width:655px;height:232.2px;"></div>
<div class="t" style="left:257.3px;top:1037.40px;line-height:24px;font-size:16.8px;color:#444;font-weight:400;transform:scaleY(1.08);">Average spending per account</div>
<div class="t" style="left:246.8px;top:1069.5px;width:655px;height:1px;background:#efefef"></div>
<div class="t" style="left:246.8px;top:1107px;width:655px;height:2px;background:#f4f4f4"></div>
<div class="t" style="left:246.8px;top:1183.5px;width:655px;height:37px;background:#f5f5f5"></div>
<div class="t" style="left:246.8px;top:1146px;width:655px;height:1px;background:#f4f4f4"></div>
<div class="t" style="left:246.8px;top:1183px;width:655px;height:1px;background:#f4f4f4"></div>
<div class="t" style="left:246.8px;top:1220px;width:655px;height:1px;background:#f4f4f4"></div>
<div class="t" style="left:255px;top:1079.40px;line-height:20px;font-size:13px;color:#333;font-weight:700;transform:scaleY(1.08);">Account</div>
<div class="t" style="left:-345.5px;width:1000px;text-align:right;top:1079.40px;line-height:20px;font-size:13px;color:#333;font-weight:700;transform:scaleY(1.08);">Spent (average)</div>
<div class="t" style="left:-251px;width:1000px;text-align:right;top:1079.40px;line-height:20px;font-size:13px;color:#333;font-weight:700;transform:scaleY(1.08);">Total</div>
<div class="t" style="left:765px;top:1079.40px;line-height:20px;font-size:13px;color:#333;font-weight:700;transform:scaleY(1.08);">Transaction count</div>
<div class="t" style="left:255px;top:1118.70px;line-height:20px;font-size:13px;color:#3c8dbc;font-weight:400;transform:scaleY(1.08);">Taxes and Revenues Government service</div>
<div class="t" style="left:-345.5px;width:1000px;text-align:right;top:1118.70px;line-height:20px;font-size:13px;color:#b04a47;font-weight:400;transform:scaleY(1.08);">€-845.00</div>
<div class="t" style="left:-251px;width:1000px;text-align:right;top:1118.70px;line-height:20px;font-size:13px;color:#b04a47;font-weight:400;transform:scaleY(1.08);">€-10,140.00</div>
<div class="t" style="left:765px;top:1118.70px;line-height:20px;font-size:13px;color:#333;font-weight:400;transform:scaleY(1.08);">12</div>
<div class="t" style="left:255px;top:1155.70px;line-height:20px;font-size:13px;color:#3c8dbc;font-weight:400;transform:scaleY(1.08);">Greenchoice Electricity</div>
<div class="t" style="left:-345.5px;width:1000px;text-align:right;top:1155.70px;line-height:20px;font-size:13px;color:#b04a47;font-weight:400;transform:scaleY(1.08);">€-82.00</div>
<div class="t" style="left:-251px;width:1000px;text-align:right;top:1155.70px;line-height:20px;font-size:13px;color:#b04a47;font-weight:400;transform:scaleY(1.08);">€-984.05</div>
<div class="t" style="left:765px;top:1155.70px;line-height:20px;font-size:13px;color:#333;font-weight:400;transform:scaleY(1.08);">12</div>
<div class="t" style="left:255px;top:1192.70px;line-height:20px;font-size:13px;color:#3c8dbc;font-weight:400;transform:scaleY(1.08);">The Water Company</div>
<div class="t" style="left:-345.5px;width:1000px;text-align:right;top:1192.70px;line-height:20px;font-size:13px;color:#b04a47;font-weight:400;transform:scaleY(1.08);">€-9.83</div>
<div class="t" style="left:-251px;width:1000px;text-align:right;top:1192.70px;line-height:20px;font-size:13px;color:#b04a47;font-weight:400;transform:scaleY(1.08);">€-117.94</div>
<div class="t" style="left:765px;top:1192.70px;line-height:20px;font-size:13px;color:#333;font-weight:400;transform:scaleY(1.08);">12</div>
<div class="t" style="left:255px;top:1229.90px;line-height:20px;font-size:13px;color:#333;font-weight:400;transform:scaleY(1.08);">Sum</div>
<div class="t" style="left:-251px;width:1000px;text-align:right;top:1229.90px;line-height:20px;font-size:13px;color:#b04a47;font-weight:400;transform:scaleY(1.08);">€-22,483.98</div>
<div class="t" style="left:765px;top:1229.90px;line-height:20px;font-size:13px;color:#333;font-weight:400;transform:scaleY(1.08);">72</div>
<div class="box" style="left:931.6px;top:1023.8px;width:653px;height:552.2px;"></div>
<div class="t" style="left:942.1px;top:1037.40px;line-height:24px;font-size:16.8px;color:#444;font-weight:400;transform:scaleY(1.08);">Expenses (top 10)</div>
<div class="t" style="left:931.6px;top:1069.5px;width:653px;height:1px;background:#efefef"></div>
<div class="t" style="left:949px;top:1088.90px;line-height:20px;font-size:13px;color:#333;font-weight:700;transform:scaleY(1.08);">Description</div>
<div class="t" style="left:1093px;top:1088.90px;line-height:20px;font-size:13px;color:#333;font-weight:700;transform:scaleY(1.08);">Date</div>
<div class="t" style="left:1231px;top:1088.90px;line-height:20px;font-size:13px;color:#333;font-weight:700;transform:scaleY(1.08);">Account</div>
<div class="t" style="left:566px;width:1000px;text-align:right;top:1088.90px;line-height:20px;font-size:13px;color:#333;font-weight:700;transform:scaleY(1.08);">Amount</div>
<div class="t" style="left:941.6px;top:1117px;width:634px;height:2px;background:#f4f4f4"></div>
<div class="t" style="left:941.6px;top:1154.45px;width:634px;height:1px;background:#f4f4f4"></div>
<div class="t" style="left:949px;top:1128.10px;line-height:20px;font-size:13px;color:#3c8dbc;font-weight:400;transform:scaleY(1.08);">Rent for January</div>
<div class="t" style="left:1093px;top:1128.10px;line-height:20px;font-size:13px;color:#333;font-weight:400;transform:scaleY(1.08);">January 2, 2017</div>
<div class="t" style="left:1231px;top:1128.10px;line-height:20px;font-size:13px;color:#3c8dbc;font-weight:400;transform:scaleY(1.08);">Taxes and Revenues Government service</div>
<div class="t" style="left:566px;width:1000px;text-align:right;top:1128.10px;line-height:20px;font-size:13px;color:#b04a47;font-weight:400;transform:scaleY(1.08);">€-845.00</div>
<div class="t" style="left:941.6px;top:1191.9px;width:634px;height:1px;background:#f4f4f4"></div>
<div class="t" style="left:949px;top:1165.55px;line-height:20px;font-size:13px;color:#3c8dbc;font-weight:400;transform:scaleY(1.08);">Rent for June</div>
<div class="t" style="left:1093px;top:1165.55px;line-height:20px;font-size:13px;color:#333;font-weight:400;transform:scaleY(1.08);">June 2, 2017</div>
<div class="t" style="left:1231px;top:1165.55px;line-height:20px;font-size:13px;color:#3c8dbc;font-weight:400;transform:scaleY(1.08);">Taxes and Revenues Government service</div>
<div class="t" style="left:566px;width:1000px;text-align:right;top:1165.55px;line-height:20px;font-size:13px;color:#b04a47;font-weight:400;transform:scaleY(1.08);">€-845.00</div>
<div class="t" style="left:941.6px;top:1229.35px;width:634px;height:1px;background:#f4f4f4"></div>
<div class="t" style="left:949px;top:1203.00px;line-height:20px;font-size:13px;color:#3c8dbc;font-weight:400;transform:scaleY(1.08);">Rent for May</div>
<div class="t" style="left:1093px;top:1203.00px;line-height:20px;font-size:13px;color:#333;font-weight:400;transform:scaleY(1.08);">May 2, 2017</div>
<div class="t" style="left:1231px;top:1203.00px;line-height:20px;font-size:13px;color:#3c8dbc;font-weight:400;transform:scaleY(1.08);">Taxes and Revenues Government service</div>
<div class="t" style="left:566px;width:1000px;text-align:right;top:1203.00px;line-height:20px;font-size:13px;color:#b04a47;font-weight:400;transform:scaleY(1.08);">€-845.00</div>
<div class="t" style="left:941.6px;top:1266.8px;width:634px;height:1px;background:#f4f4f4"></div>
<div class="t" style="left:949px;top:1240.45px;line-height:20px;font-size:13px;color:#3c8dbc;font-weight:400;transform:scaleY(1.08);">Rent for July</div>
<div class="t" style="left:1093px;top:1240.45px;line-height:20px;font-size:13px;color:#333;font-weight:400;transform:scaleY(1.08);">July 2, 2017</div>
<div class="t" style="left:1231px;top:1240.45px;line-height:20px;font-size:13px;color:#3c8dbc;font-weight:400;transform:scaleY(1.08);">Taxes and Revenues Government service</div>
<div class="t" style="left:566px;width:1000px;text-align:right;top:1240.45px;line-height:20px;font-size:13px;color:#b04a47;font-weight:400;transform:scaleY(1.08);">€-845.00</div>
<div class="t" style="left:941.6px;top:1304.25px;width:634px;height:1px;background:#f4f4f4"></div>
<div class="t" style="left:949px;top:1277.90px;line-height:20px;font-size:13px;color:#3c8dbc;font-weight:400;transform:scaleY(1.08);">Rent for April</div>
<div class="t" style="left:1093px;top:1277.90px;line-height:20px;font-size:13px;color:#333;font-weight:400;transform:scaleY(1.08);">April 2, 2017</div>
<div class="t" style="left:1231px;top:1277.90px;line-height:20px;font-size:13px;color:#3c8dbc;font-weight:400;transform:scaleY(1.08);">Taxes and Revenues Government service</div>
<div class="t" style="left:566px;width:1000px;text-align:right;top:1277.90px;line-height:20px;font-size:13px;color:#b04a47;font-weight:400;transform:scaleY(1.08);">€-845.00</div>
<div class="t" style="left:941.6px;top:1341.7px;width:634px;height:1px;background:#f4f4f4"></div>
<div class="t" style="left:949px;top:1315.35px;line-height:20px;font-size:13px;color:#3c8dbc;font-weight:400;transform:scaleY(1.08);">Rent for August</div>
<div class="t" style="left:1093px;top:1315.35px;line-height:20px;font-size:13px;color:#333;font-weight:400;transform:scaleY(1.08);">August 2, 2017</div>
<div class="t" style="left:1231px;top:1315.35px;line-height:20px;font-size:13px;color:#3c8dbc;font-weight:400;transform:scaleY(1.08);">Taxes and Revenues Government service</div>
<div class="t" style="left:566px;width:1000px;text-align:right;top:1315.35px;line-height:20px;font-size:13px;color:#b04a47;font-weight:400;transform:scaleY(1.08);">€-845.00</div>
<div class="t" style="left:941.6px;top:1379.15px;width:634px;height:1px;background:#f4f4f4"></div>
<div class="t" style="left:949px;top:1352.80px;line-height:20px;font-size:13px;color:#3c8dbc;font-weight:400;transform:scaleY(1.08);">Rent for September</div>
<div class="t" style="left:1093px;top:1352.80px;line-height:20px;font-size:13px;color:#333;font-weight:400;transform:scaleY(1.08);">September 2, 2017</div>
<div class="t" style="left:1231px;top:1352.80px;line-height:20px;font-size:13px;color:#3c8dbc;font-weight:400;transform:scaleY(1.08);">Taxes and Revenues Government service</div>
<div class="t" style="left:566px;width:1000px;text-align:right;top:1352.80px;line-height:20px;font-size:13px;color:#b04a47;font-weight:400;transform:scaleY(1.08);">€-845.00</div>
<div class="t" style="left:941.6px;top:1416.6px;width:634px;height:1px;background:#f4f4f4"></div>
<div class="t" style="left:949px;top:1390.25px;line-height:20px;font-size:13px;color:#3c8dbc;font-weight:400;transform:scaleY(1.08);">Rent for March</div>
<div class="t" style="left:1093px;top:1390.25px;line-height:20px;font-size:13px;color:#333;font-weight:400;transform:scaleY(1.08);">March 2, 2017</div>
<div class="t" style="left:1231px;top:1390.25px;line-height:20px;font-size:13px;color:#3c8dbc;font-weight:400;transform:scaleY(1.08);">Taxes and Revenues Government service</div>
<div class="t" style="left:566px;width:1000px;text-align:right;top:1390.25px;line-height:20px;font-size:13px;color:#b04a47;font-weight:400;transform:scaleY(1.08);">€-845.00</div>
<div class="t" style="left:941.6px;top:1454.05px;width:634px;height:1px;background:#f4f4f4"></div>
<div class="t" style="left:949px;top:1427.70px;line-height:20px;font-size:13px;color:#3c8dbc;font-weight:400;transform:scaleY(1.08);">Rent for November</div>
<div class="t" style="left:1093px;top:1427.70px;line-height:20px;font-size:13px;color:#333;font-weight:400;transform:scaleY(1.08);">November 2, 2017</div>
<div class="t" style="left:1231px;top:1427.70px;line-height:20px;font-size:13px;color:#3c8dbc;font-weight:400;transform:scaleY(1.08);">Taxes and Revenues Government service</div>
<div class="t" style="left:566px;width:1000px;text-align:right;top:1427.70px;line-height:20px;font-size:13px;color:#b04a47;font-weight:400;transform:scaleY(1.08);">€-845.00</div>
<div class="t" style="left:941.6px;top:1491.5px;width:634px;height:1px;background:#f4f4f4"></div>
<div class="t" style="left:949px;top:1465.15px;line-height:20px;font-size:13px;color:#3c8dbc;font-weight:400;transform:scaleY(1.08);">Rent for October</div>
<div class="t" style="left:1093px;top:1465.15px;line-height:20px;font-size:13px;color:#333;font-weight:400;transform:scaleY(1.08);">October 2, 2017</div>
<div class="t" style="left:1231px;top:1465.15px;line-height:20px;font-size:13px;color:#3c8dbc;font-weight:400;transform:scaleY(1.08);">Taxes and Revenues Government service</div>
<div class="t" style="left:566px;width:1000px;text-align:right;top:1465.15px;line-height:20px;font-size:13px;color:#b04a47;font-weight:400;transform:scaleY(1.08);">€-845.00</div>
<div class="t" style="left:941.6px;top:1492.5px;width:560px;height:36.45px;background:#f5f5f5"></div>
<div class="t" style="left:949px;top:1502.60px;line-height:20px;font-size:13px;color:#3c8dbc;font-weight:400;transform:scaleY(1.08);">Show entire list</div>
<div class="t" style="left:941.6px;top:1528.95px;width:634px;height:1px;background:#f4f4f4"></div>
<div class="t" style="left:949px;top:1540.05px;line-height:20px;font-size:13px;color:#333;font-weight:400;transform:scaleY(1.08);">Sum</div>
<div class="t" style="left:566px;width:1000px;text-align:right;top:1540.05px;line-height:20px;font-size:13px;color:#999;font-weight:400;transform:scaleY(1.08);">€0.00</div>
<div class="box" style="left:246.8px;top:1594.8px;width:1338px;height:301.2px;"></div>
</div>
</div>
</body></html>
